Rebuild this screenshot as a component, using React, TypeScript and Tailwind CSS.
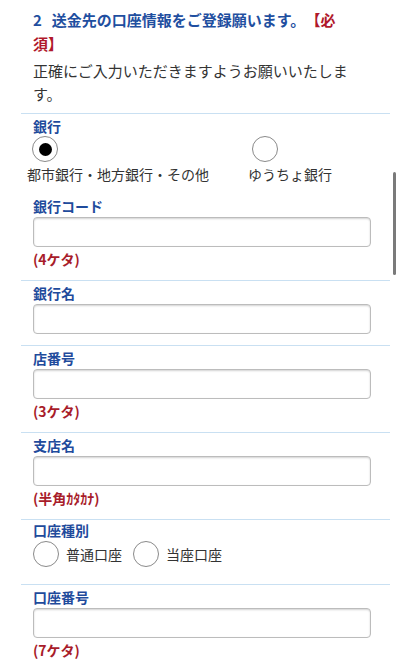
import React from "react";

const font = { fontFamily: '"Noto Sans CJK JP", "Noto Sans", sans-serif' };

function Radio({ checked = false }: { checked?: boolean }) {
  return (
    <span className="flex h-[26px] w-[26px] shrink-0 items-center justify-center rounded-full border border-[#8a8a8a] bg-white">
      {checked && <span className="h-[13px] w-[13px] rounded-full bg-black" />}
    </span>
  );
}

function Field({
  label,
  hint,
  first = false,
}: {
  label: string;
  hint?: string;
  first?: boolean;
}) {
  return (
    <section
      className={
        first ? "mt-[12px] pb-[11px]" : "border-t border-[#c9e0f2] pt-[2px] pb-[11px]"
      }
    >
      <div className="px-[12px]">
        <h3 className="text-[14px] leading-[20px] font-bold text-[#1f4b9c]">{label}</h3>
        <input
          type="text"
          className="mt-[1px] block h-[30px] w-[338px] rounded-[4px] border border-[#bcbcbc] bg-white shadow-[inset_0_1px_2px_rgba(0,0,0,0.18)]"
        />
        {hint && (
          <p className="mt-[2px] text-[14px] leading-[20px] font-bold text-[#a81c2a]">
            {hint}
          </p>
        )}
      </div>
    </section>
  );
}

export default function App() {
  return (
    <div
      className="relative h-[668px] w-[400px] overflow-hidden bg-white [text-spacing-trim:space-all]"
      style={font}
    >
      <div className="pl-[33px] pr-[50px] pt-[8px]">
        <h2 className="text-[15px] leading-[24px] font-bold text-[#1f4fa0]">
          <span className="pr-[10px]">2</span>
          <span>送金先の口座情報をご登録願います。</span>
          <span className="text-[#b0182a]">【必須】</span>
        </h2>
        <p className="mt-[3px] text-[15px] leading-[23px] text-[#333333]">
          正確にご入力いただきますようお願いいたします。
        </p>
      </div>

      <div className="mx-[21px] mt-[8px] w-[369px]">
        <section className="border-t border-[#c9e0f2] pt-[2px]">
          <div className="px-[12px]">
            <h3 className="text-[14px] leading-[20px] font-bold text-[#1f4b9c]">銀行</h3>
          </div>
          <div className="flex">
            <div className="w-[227px] pl-[6px]">
              <div className="pl-[5px]">
                <Radio checked />
              </div>
              <p className="mt-[2px] text-[14px] leading-[20px] text-[#333333]">
                都市銀行・地方銀行・その他
              </p>
            </div>
            <div>
              <div className="pl-[4px]">
                <Radio />
              </div>
              <p className="mt-[2px] text-[14px] leading-[20px] text-[#333333]">
                ゆうちょ銀行
              </p>
            </div>
          </div>
          <Field label="銀行コード" hint="(4ケタ)" first />
        </section>

        <Field label="銀行名" />
        <Field label="店番号" hint="(3ケタ)" />
        <Field label="支店名" hint="(半角ｶﾀｶﾅ)" />

        <section className="border-t border-[#c9e0f2] pb-[17px]">
          <div className="px-[12px]">
            <h3 className="text-[14px] leading-[20px] font-bold text-[#1f4b9c]">口座種別</h3>
            <div className="mt-[1px] flex items-center">
              <Radio />
              <span className="ml-[7px] text-[14px] leading-[20px] text-[#333333]">普通口座</span>
              <span className="ml-[11px]">
                <Radio />
              </span>
              <span className="ml-[7px] text-[14px] leading-[20px] text-[#333333]">当座口座</span>
            </div>
          </div>
        </section>

        <Field label="口座番号" hint="(7ケタ)" />
      </div>

      <div className="absolute right-[4px] top-[172px] h-[103px] w-[3px] rounded-full bg-[#7a7a7a]" />
    </div>
  );
}
